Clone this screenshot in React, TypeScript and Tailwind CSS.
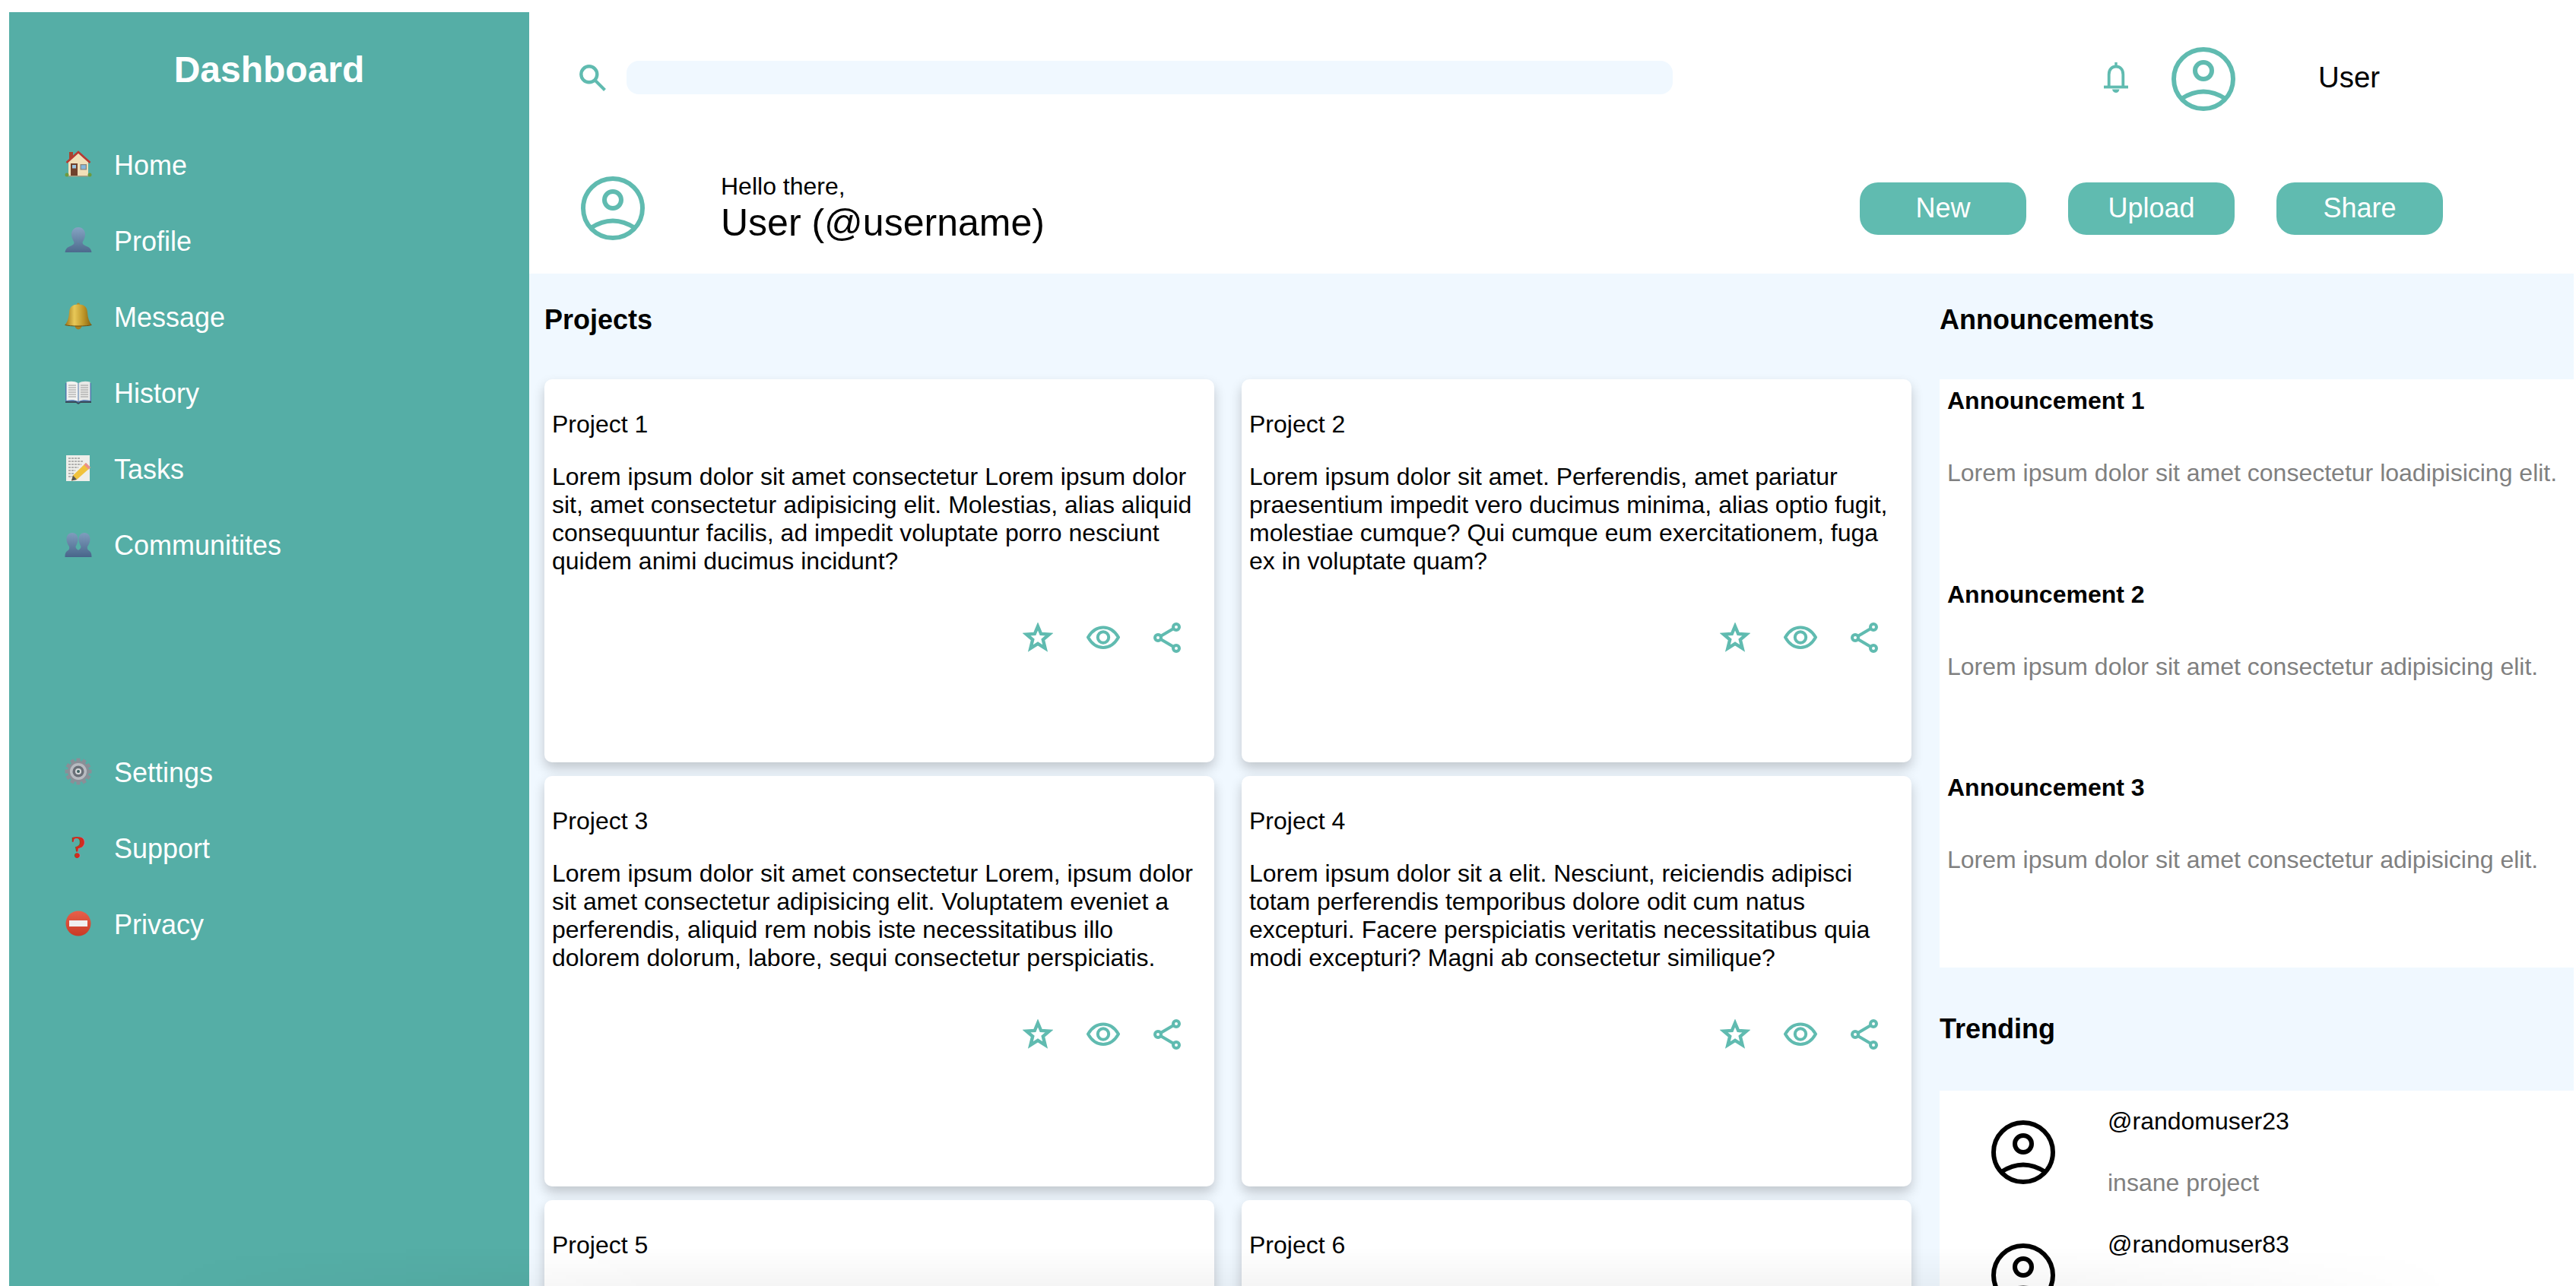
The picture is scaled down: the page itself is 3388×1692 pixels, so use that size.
import React from "react";

function Avatar({ className }: { className?: string }) {
  return (
    <svg viewBox="0 0 84 84" fill="none" stroke="currentColor" strokeWidth={6} className={className}>
      <circle cx="42" cy="42" r="39" />
      <circle cx="42" cy="31" r="11" />
      <path d="M13 68 Q42 49 71 68" />
    </svg>
  );
}

function Star() {
  return (
    <svg viewBox="0 0 40 40" fill="none" stroke="currentColor" strokeWidth={4.4} className="w-10 h-10">
      <path d="M20 5 L24.2 15 L35 15.6 L26.8 22.6 L29.6 34 L20 27.8 L10.4 34 L13.2 22.6 L5 15.6 L15.8 15 Z" />
    </svg>
  );
}

function Eye() {
  return (
    <svg viewBox="0 0 44 40" fill="none" stroke="currentColor" strokeWidth={4} className="w-11 h-10">
      <path d="M2 19.5 C8 9 15 6.5 22 6.5 C29 6.5 36 9 42 19.5 C36 30 29 33 22 33 C15 33 8 30 2 19.5 Z" />
      <circle cx="22" cy="19.5" r="7.2" />
    </svg>
  );
}

function Share() {
  return (
    <svg viewBox="0 0 40 40" fill="none" stroke="currentColor" strokeWidth={4} className="w-10 h-10">
      <circle cx="32" cy="6" r="4" />
      <circle cx="8" cy="20" r="4" />
      <circle cx="32" cy="34" r="4" />
      <path d="M11.5 18 L28.5 8 M11.5 22 L28.5 32" />
    </svg>
  );
}

function Search() {
  return (
    <svg viewBox="0 0 35 35" fill="none" stroke="currentColor" className="w-[35px] h-[35px] shrink-0">
      <circle cx="12.8" cy="12.8" r="10.5" strokeWidth={4.4} />
      <path d="M20.5 20.5 L33.5 33.5" strokeWidth={4} />
    </svg>
  );
}

function BellLine() {
  return (
    <svg viewBox="0 0 32 40" fill="none" stroke="currentColor" className="w-8 h-10 shrink-0">
      <path d="M16 0 V5" strokeWidth={3.4} />
      <path d="M6.7 32 V16 C6.7 9 11 5.5 16 5.5 C21 5.5 25.3 9 25.3 16 V32" strokeWidth={3.8} />
      <path d="M0 32.5 H32" strokeWidth={3.8} />
      <path d="M11 35.5 H20.5 C20 38.5 18 40 16 40 C14 40 11.5 38.5 11 35.5 Z" fill="currentColor" stroke="none" />
    </svg>
  );
}

const emojiBox = "w-[36px] h-[36px] shrink-0 mb-[5px]";

function EHouse() {
  return (
    <svg viewBox="0 0 36 36" className={emojiBox}>
      <rect x="6" y="2" width="5" height="9" fill="#a8442f" />
      <path d="M5 15 L18 3.5 L31 15 V33 H5 Z" fill="#f1dfb8" />
      <path d="M2.5 16 L18 2 L33.5 16" fill="none" stroke="#b93a32" strokeWidth={2.6} />
      <rect x="8" y="17" width="9" height="16" fill="#70412c" />
      <rect x="10" y="19" width="5" height="4.5" fill="#9cc4e0" />
      <rect x="20.5" y="18" width="8.5" height="7.5" fill="#8c8478" />
      <rect x="21.7" y="19.2" width="6.1" height="5.1" fill="#86b7dd" />
      <rect x="5" y="33" width="26" height="1.5" fill="#a89c80" />
      <circle cx="3" cy="32" r="2.5" fill="#6c9a3e" />
      <circle cx="33" cy="32" r="2.5" fill="#6c9a3e" />
    </svg>
  );
}

function EBust() {
  return (
    <svg viewBox="0 0 36 36" className={emojiBox}>
      <defs>
        <linearGradient id="bustGrad" x1="0" y1="0" x2="0" y2="1">
          <stop offset="0" stopColor="#85a3c2" />
          <stop offset="1" stopColor="#4c6a8d" />
        </linearGradient>
      </defs>
      <path
        d="M18 1 C24 1 27 5.5 27 10.5 C27 15 24.5 18.5 23.5 21 C23.5 24 27 25 30 26.5 C33.5 28 35 30.5 35.5 34 H0.5 C1 30.5 2.5 28 6 26.5 C9 25 12.5 24 12.5 21 C11.5 18.5 9 15 9 10.5 C9 5.5 12 1 18 1 Z"
        fill="url(#bustGrad)"
      />
    </svg>
  );
}

function EBusts() {
  return (
    <svg viewBox="0 0 36 36" className={emojiBox}>
      <defs>
        <linearGradient id="bustGrad2" x1="0" y1="0" x2="0" y2="1">
          <stop offset="0" stopColor="#7f9dbd" />
          <stop offset="1" stopColor="#48658a" />
        </linearGradient>
      </defs>
      <path d="M10 3 C15 3 17.5 7 17.5 11.5 C17.5 15.5 15.5 19 14.5 21 C14.5 24 17 25 19 26.5 C20 28 20 31 20 35 H0.5 C0.5 31 1 28.5 4 26.5 C6 25 6.5 24 6 21 C4.5 19 2.5 15.5 2.5 11.5 C2.5 7 5 3 10 3 Z" fill="url(#bustGrad2)" />
      <path d="M26 3 C31 3 33.5 7 33.5 11.5 C33.5 15.5 31.5 19 30 21 C29.5 24 30 25 32 26.5 C35 28.5 35.5 31 35.5 35 H16 C16 31 16 28 17 26.5 C19 25 21.5 24 21.5 21 C20.5 19 18.5 15.5 18.5 11.5 C18.5 7 21 3 26 3 Z" fill="url(#bustGrad2)" />
    </svg>
  );
}

function EBell() {
  return (
    <svg viewBox="0 0 36 36" className={emojiBox}>
      <defs>
        <linearGradient id="bellGrad" x1="0" y1="0" x2="1" y2="0">
          <stop offset="0" stopColor="#9a7218" />
          <stop offset="0.35" stopColor="#e8c858" />
          <stop offset="0.7" stopColor="#bd9528" />
          <stop offset="1" stopColor="#856212" />
        </linearGradient>
      </defs>
      <circle cx="18" cy="2.5" r="2" fill="#b08a2b" />
      <circle cx="18" cy="31" r="4.4" fill="#a8801f" />
      <path d="M18 2.5 C27 2.5 29.5 7 30 13 C30.5 20 32 25 35.5 29.5 C30 31.5 6 31.5 0.5 29.5 C4 25 5.5 20 6 13 C6.5 7 9 2.5 18 2.5 Z" fill="url(#bellGrad)" />
      <path d="M0.5 29.5 C6 31.5 30 31.5 35.5 29.5" fill="none" stroke="#6d4f12" strokeWidth={1} />
    </svg>
  );
}

function EBook() {
  return (
    <svg viewBox="0 0 36 36" className={emojiBox}>
      <path d="M1 6 H35 V31 H21 L18 33 L15 31 H1 Z" fill="#4e78ad" />
      <path d="M2.5 4.5 C8 3 14 3.5 17.5 6 V30 C14 28 8 27.5 2.5 29 Z" fill="#f2f2f0" />
      <path d="M33.5 4.5 C28 3 22 3.5 18.5 6 V30 C22 28 28 27.5 33.5 29 Z" fill="#e8e8e6" />
      <path d="M5 9 H15 M5 12 H15 M5 15 H15 M5 18 H15 M5 21 H15 M5 24 H15 M21 9 H31 M21 12 H31 M21 15 H31 M21 18 H31 M21 21 H31 M21 24 H31" stroke="#9a9a9a" strokeWidth={1} />
      <path d="M1 30 H15 L18 32 L21 30 H35 V32 H21 L18 34 L15 32 H1 Z" fill="#3c4a58" />
    </svg>
  );
}

function EMemo() {
  return (
    <svg viewBox="0 0 36 36" className={emojiBox}>
      <rect x="2" y="1" width="31" height="34" fill="#eeeeea" />
      <path d="M5 5 H20 M5 9 H24 M5 13 H22 M5 17 H18 M5 21 H14 M5 25 H12 M5 29 H10" stroke="#777" strokeWidth={1} strokeDasharray="3 1" />
      <path d="M28 11 L34 17 L16 33 L9 34.5 L11 27.5 Z" fill="#f0c23c" />
      <path d="M28 11 L34 17 L31.5 19.5 L25.5 13.5 Z" fill="#e88f8f" />
      <path d="M11 27.5 L16 33 L9 34.5 Z" fill="#555" />
    </svg>
  );
}

function EGear() {
  return (
    <svg viewBox="0 0 36 36" className={emojiBox}>
      {Array.from({ length: 12 }).map((_, i) => (
        <rect key={i} x="15.5" y="0.5" width="5" height="6" fill="#8a8f97" transform={`rotate(${i * 30} 18 18)`} />
      ))}
      <circle cx="18" cy="18" r="14" fill="#8a8f97" />
      <circle cx="18" cy="18" r="11" fill="#b8bbc1" />
      <circle cx="18" cy="18" r="7.5" fill="#6a6f77" />
      <circle cx="18" cy="18" r="4" fill="#d8dadc" />
      <circle cx="18" cy="18" r="2" fill="#3f5f60" />
    </svg>
  );
}

function EQuestion() {
  return (
    <span className="w-[36px] h-[36px] shrink-0 mb-[5px] flex items-center justify-center [font-family:'Liberation_Serif',serif] font-bold text-[42px] leading-none text-[#d02c1e]">
      ?
    </span>
  );
}

function ENoEntry() {
  return (
    <svg viewBox="0 0 36 36" className={emojiBox}>
      <defs>
        <linearGradient id="noGrad" x1="0" y1="0" x2="0" y2="1">
          <stop offset="0" stopColor="#e8604a" />
          <stop offset="1" stopColor="#c93a25" />
        </linearGradient>
      </defs>
      <circle cx="18" cy="18" r="16.5" fill="url(#noGrad)" />
      <rect x="6" y="14" width="24" height="8" fill="#f0f0f0" />
    </svg>
  );
}

function NavItem({ icon, label }: { icon: React.ReactNode; label: string }) {
  return (
    <li className="flex items-center h-[100px] gap-[29px] text-[36px] text-white">
      {icon}
      <span>{label}</span>
    </li>
  );
}

const projects = [
  "Lorem ipsum dolor sit amet consectetur Lorem ipsum dolor sit, amet consectetur adipisicing elit. Molestias, alias aliquid consequuntur facilis, ad impedit voluptate porro nesciunt quidem animi ducimus incidunt?",
  "Lorem ipsum dolor sit amet. Perferendis, amet pariatur praesentium impedit vero ducimus minima, alias optio fugit, molestiae cumque? Qui cumque eum exercitationem, fuga ex in voluptate quam?",
  "Lorem ipsum dolor sit amet consectetur Lorem, ipsum dolor sit amet consectetur adipisicing elit. Voluptatem eveniet a perferendis, aliquid rem nobis iste necessitatibus illo dolorem dolorum, labore, sequi consectetur perspiciatis.",
  "Lorem ipsum dolor sit a elit. Nesciunt, reiciendis adipisci totam perferendis temporibus dolore odit cum natus excepturi. Facere perspiciatis veritatis necessitatibus quia modi excepturi? Magni ab consectetur similique?",
  "",
  "",
];

function Card({ n, text }: { n: number; text: string }) {
  return (
    <div className="bg-white rounded-[10px] shadow-[0_8px_16px_0_rgba(0,0,0,0.2)] pt-[41px] px-[10px]">
      <p>Project {n}</p>
      <p className="mt-[32px] min-h-[148px]">{text}</p>
      {text && (
        <div className="flex justify-end items-center gap-x-[44px] mt-[62px] pr-[32px] text-[#60bbb0]">
          <Star />
          <Eye />
          <span className="-ml-[2px]">
            <Share />
          </span>
        </div>
      )}
    </div>
  );
}

function Announcement({ title, text }: { title: string; text: string }) {
  return (
    <div className="h-[254.5px] pt-[10px] pl-[10px]">
      <h3 className="font-bold text-[32px]">{title}</h3>
      <p className="mt-[58px] text-[#808080] whitespace-nowrap">{text}</p>
    </div>
  );
}

function Trend({ handle }: { handle: string }) {
  return (
    <div className="flex items-center h-[162px] pl-[68px] gap-[69px]">
      <Avatar className="w-[84px] h-[84px] shrink-0 text-black" />
      <div className="flex flex-col gap-[44px]">
        <p>{handle}</p>
        <p className="text-[#808080]">insane project</p>
      </div>
    </div>
  );
}

export default function App() {
  return (
    <div className="relative flex h-[1692px] w-[3388px] overflow-hidden bg-white pl-[12px] pr-[3px] text-[32px] leading-[normal] text-black [font-family:'Liberation_Sans',Arial,sans-serif]">
      <aside className="mt-4 w-[684px] shrink-0 bg-[#55aea6]">
        <h1 className="pt-[48px] text-center text-[48px] font-bold text-white">Dashboard</h1>
        <ul className="mt-[49px] pl-[73px]">
          <NavItem icon={<EHouse />} label="Home" />
          <NavItem icon={<EBust />} label="Profile" />
          <NavItem icon={<EBell />} label="Message" />
          <NavItem icon={<EBook />} label="History" />
          <NavItem icon={<EMemo />} label="Tasks" />
          <NavItem icon={<EBusts />} label="Communitites" />
        </ul>
        <ul className="mt-[199px] pl-[73px]">
          <NavItem icon={<EGear />} label="Settings" />
          <NavItem icon={<EQuestion />} label="Support" />
          <NavItem icon={<ENoEntry />} label="Privacy" />
        </ul>
      </aside>

      <main className="flex min-w-0 flex-1 flex-col">
        <header className="flex h-[188px] shrink-0 items-center pt-4 pl-[66px] text-[#60bbb0]">
          <Search />
          <div className="ml-[27px] h-[44px] w-[1376px] rounded-[16px] bg-[#f0f8ff]" />
          <div className="ml-[567px]">
            <BellLine />
          </div>
          <Avatar className="ml-[57px] mt-1 h-[84px] w-[84px] shrink-0" />
          <span className="ml-[109px] text-[38.4px] text-black">User</span>
        </header>

        <section className="flex h-[172px] shrink-0 items-center pl-[68px] pr-[172px]">
          <Avatar className="h-[84px] w-[84px] shrink-0 text-[#60bbb0]" />
          <div className="ml-[100px]">
            <p>Hello there,</p>
            <p className="text-[50px]">User (@username)</p>
          </div>
          <div className="ml-auto flex gap-[55px]">
            {["New", "Upload", "Share"].map((b) => (
              <button key={b} className="h-[69px] w-[219px] rounded-[24px] bg-[#60bbb0] text-[36px] text-white">
                {b}
              </button>
            ))}
          </div>
        </section>

        <div className="flex min-h-0 flex-1 bg-[#f0f8ff]">
          <div className="w-[1855px] shrink-0 pl-[20px]">
            <h2 className="h-[139px] pt-[40px] text-[36px] font-bold">Projects</h2>
            <div className="grid grid-cols-[881px_881px] grid-rows-[504px_540px_400px] gap-x-[36px] gap-y-[18px]">
              {projects.map((t, i) => (
                <Card key={i} n={i + 1} text={t} />
              ))}
            </div>
          </div>
          <div className="min-w-0 flex-1">
            <h2 className="h-[139px] pt-[40px] text-[36px] font-bold">Announcements</h2>
            <div className="h-[774px] bg-white">
              <Announcement title="Announcement 1" text="Lorem ipsum dolor sit amet consectetur loadipisicing elit." />
              <Announcement title="Announcement 2" text="Lorem ipsum dolor sit amet consectetur adipisicing elit." />
              <Announcement title="Announcement 3" text="Lorem ipsum dolor sit amet consectetur adipisicing elit." />
            </div>
            <h2 className="h-[162px] pt-[60px] text-[36px] font-bold">Trending</h2>
            <div className="bg-white">
              <Trend handle="@randomuser23" />
              <Trend handle="@randomuser83" />
            </div>
          </div>
        </div>
      </main>

      <div className="pointer-events-none absolute bottom-0 left-[200px] right-[150px] h-[52px] bg-gradient-to-t from-black/4 to-transparent [mask-image:linear-gradient(to_right,transparent,black_22%,black_80%,transparent)]" />
    </div>
  );
}
